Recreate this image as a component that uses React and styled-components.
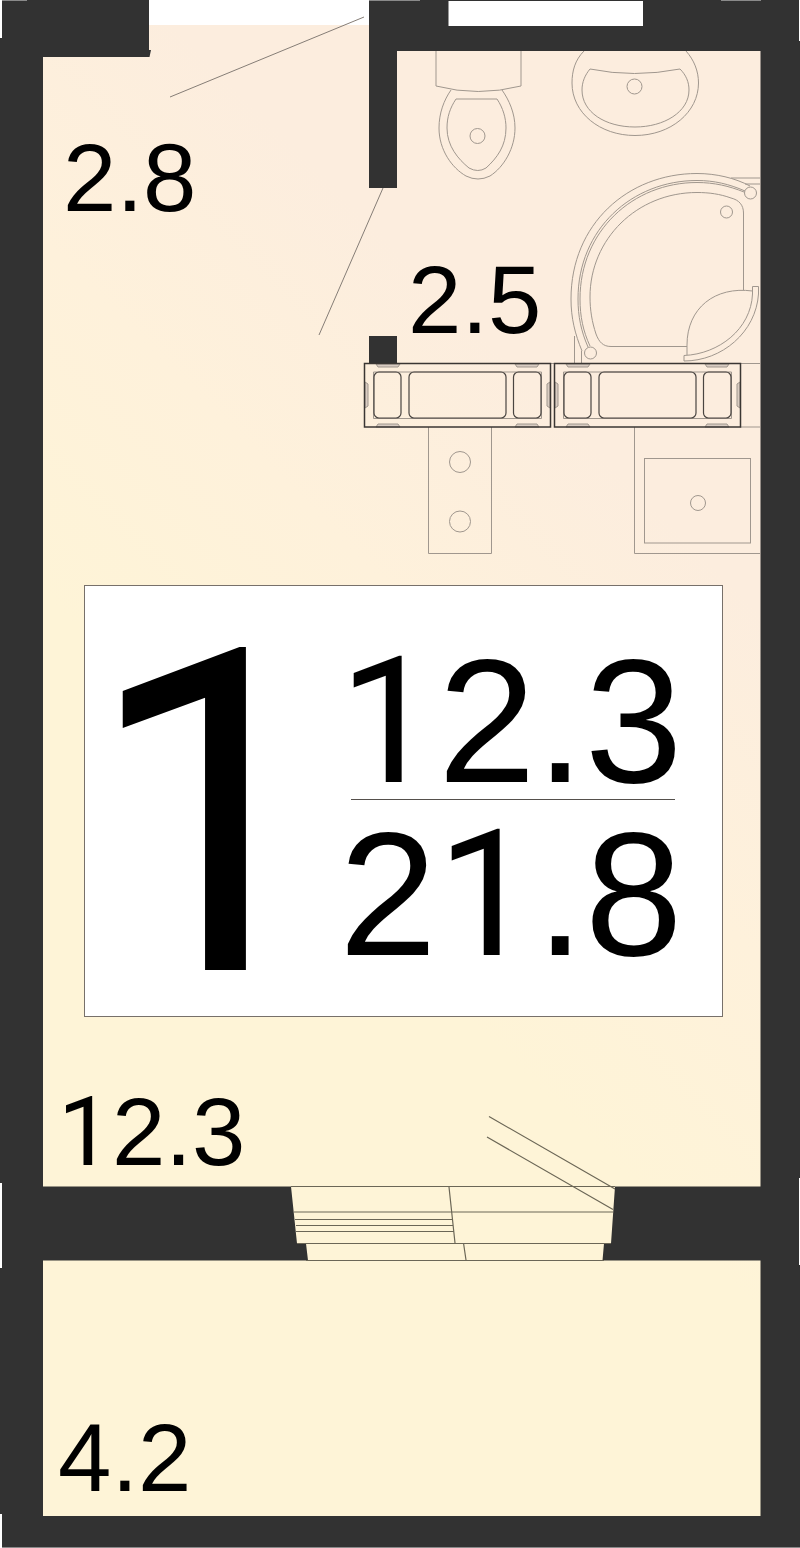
import React from "react";
import styled, { createGlobalStyle } from "styled-components";

const WALL = "#323232";
const LINE = "#a0978e";
const DARK_LINE = "#4a4541";

const GlobalStyle = createGlobalStyle`
  body {
    margin: 0;
    background: #ffffff;
    color: #000000;
    font-family: "Liberation Sans", Arial, sans-serif;
  }
`;

const Plan = styled.main`
  display: grid;
  grid-template-columns: minmax(0, 1fr);
  width: 100%;
`;

const Drawing = styled.svg`
  grid-area: 1 / 1;
  display: block;
  width: 100%;
  height: auto;
`;

const Rooms = styled.div`
  grid-area: 1 / 1;
  display: grid;
  grid-template-columns: minmax(0, 1fr);
  grid-template-rows: 585fr 432fr 243fr 288fr;
`;

const Entrance = styled.section`
  display: grid;
  grid-template-columns: 46fr 54fr;
  align-items: start;
`;

const Room = styled.section`
  padding: ${(p) => p.$top}px 0 0 ${(p) => p.$left}px;
`;

const Area = styled.p`
  margin: 0;
  font-size: ${(p) => (p.$large ? 176 : 96)}px;
  line-height: ${(p) => (p.$large ? 140 : 94)}px;
  white-space: nowrap;
`;

/* The plan's lettering uses a "1" that has no foot. */
const One = styled.span`
  font-family: Roboto, sans-serif;
  line-height: 0;
`;

const Summary = styled.section`
  display: flex;
  justify-content: space-between;
  align-items: flex-start;
  box-sizing: border-box;
  margin: 0 77px 0 84px;
  padding-right: 40px;
  border: 1px solid #77706a;
  background: #ffffff;
`;

const RoomCount = styled.p`
  margin: 0;
  padding-top: 30px;
  font-family: Roboto, sans-serif;
  font-size: 452px;
  line-height: 400px;
`;

const Fraction = styled.div`
  padding-top: 65px;
`;

const Rule = styled.hr`
  height: 1px;
  margin: 8px 8px 24px 12px;
  border: 0;
  background: #55504c;
`;

function Figure({ value, large }) {
  return (
    <Area $large={large}>
      {value.split("").map((c, i) => (c === "1" ? <One key={i}>1</One> : c))}
    </Area>
  );
}

function VentBlock({ x }) {
  return (
    <g transform={`translate(${x} 363)`} fill="none">
      <g fill="#d9ccc2" stroke={LINE}>
        <path d="M12 1 L14 4 H34 L36 1 Z M151 1 L153 4 H173 L175 1 Z" />
        <path d="M12 64 L14 61 H34 L36 64 Z M151 64 L153 61 H173 L175 64 Z" />
        <path d="M1 19 L4 21 V43 L1 45 Z M186 19 L183 21 V43 L186 45 Z" />
      </g>
      <path d="M9.500 9 H177.500 V55.500 H9.500 Z" stroke={LINE} />
      <g stroke={DARK_LINE} strokeWidth="1.200">
        <rect x="10" y="9" width="27" height="46" rx="5" />
        <rect x="45" y="9" width="97" height="46" rx="5" />
        <rect x="149.500" y="9" width="27.500" height="46" rx="5" />
      </g>
      <rect x="0.500" y="0.500" width="186" height="63.500" stroke="#3a3633" strokeWidth="1.500" />
    </g>
  );
}

function Toilet() {
  return (
    <g>
      <path d="M436 51 V86 Q478 97 521 86 V51" />
      <path d="M451 90 C444 100 439 113 439 128 C439 150 452 168 466 176 Q478 182 490 176 C504 167 515 148 515 128 C515 113 509 100 502 90" />
      <path d="M456 99 H497 C503 108 506 118 506 128 C506 146 497 158 486 168 Q478 173 469 168 C458 159 447 146 447 128 C447 117 450 108 456 99 Z" />
      <circle cx="477.500" cy="136" r="7.500" />
    </g>
  );
}

function Washbasin() {
  return (
    <g>
      <path d="M584 51 C575 60 572 71 572 83 C572 113 600 135.500 635 135.500 C671 135.500 698.500 112 698.500 83 C698.500 71 694 60 686 51" />
      <path d="M590 69 Q634 78 680 69 C686 75 689 82 689 90 C689 112 664 127 635 127 C605 127 582 112 582 90 C582 82 585 75 590 69 Z" />
      <circle cx="634.500" cy="86.500" r="7.500" />
    </g>
  );
}

function Shower() {
  return (
    <g>
      <path d="M582 351 C575 334 571 318 571 299 C571 224 628 173.500 697 173.500 C716 173.500 735 178 750 186" />
      <path d="M588 347 C581 331 578 316 578 299 C578 229 632 180.500 697 180.500 C714 180.500 729 184 745 191" />
      <path d="M590 346 C583 331 580 316 580 299 C580 231 633 182.500 697 182.500 C714 182.500 729 186 744 192" />
      <path d="M743.500 290 V213 C743.500 205 739 200 731 198 C720 194 709 192.500 697 192.500 C637 192.500 590 239 590 297 C590 310 592 322 596 334 C599 342 603 346.500 611 346.500 H687" />
      <circle cx="750.500" cy="193" r="6" />
      <circle cx="590.500" cy="353" r="6" />
      <circle cx="726.500" cy="212" r="6" />
      <path d="M752.500 291 C715 286 687 308 687 345 V355" />
      <path d="M752.500 294 V286.500 H758.500 V294 C756 332 722 361 684 361 V355.500 C719 354 751 329 752.500 294" />
      <path d="M731 178 H760 M745 184 H760 M574.500 336 V363 M581.500 351 V363" />
    </g>
  );
}

function Kitchen() {
  return (
    <g>
      <path d="M428.500 427 V553.500 H491.500 V427" />
      <circle cx="460" cy="462" r="10.500" />
      <circle cx="460" cy="521.500" r="10.500" />
      <path d="M634.500 427 V553.500 H760" />
      <rect x="644.500" y="458.500" width="106" height="84.500" />
      <circle cx="698" cy="503" r="7.500" />
    </g>
  );
}

function FloorPlan() {
  return (
    <Drawing viewBox="0 0 800 1548" role="img" aria-label="Floor plan">
      <defs>
        <linearGradient id="floor" gradientUnits="userSpaceOnUse" x1="475" y1="325" x2="125" y2="675">
          <stop offset="0" stopColor="#fcedde" />
          <stop offset="0.500" stopColor="#fef1db" />
          <stop offset="1" stopColor="#fef4d7" />
        </linearGradient>
      </defs>

      <rect x="43" y="25" width="718" height="1492" fill="url(#floor)" />

      <g fill={WALL}>
        <path d="M2 0 H149 V50 H151 L149.500 57 H43 V1186.500 H291 L297 1243.500 H306 L308 1260.500 H43 V1516 H760.500 V1260.500 H602.500 L604 1243.500 H611 L615 1186.500 H760.500 V51 H397 V188 H369 V0 H799 V41 H800 V1178 H799 V1265 H800 V1548 H2 V1514 H0 V1268 H2 V1183 H0 V38 H2 Z" />
        <rect x="369" y="336" width="28" height="27.500" />
      </g>
      <rect x="448.500" y="1" width="194.500" height="25" fill="#ffffff" />
      <path d="M2 0.500 H27 M369 0.500 H420 M721 0.500 H761 M2 1547.500 H800" stroke="#8a8a8a" />

      <g fill="none" stroke="#857d76">
        <path d="M170 97 L364 17 M383 188 L319 335" />
      </g>

      <g fill="none" stroke={LINE}>
        <Toilet />
        <Washbasin />
        <Shower />
        <Kitchen />
        <path d="M397 363.500 H760 M740 427 H760" />
      </g>

      <VentBlock x={364} />
      <VentBlock x={554} />

      <g fill="none" stroke="#6b6656" strokeWidth="1.200">
        <path d="M291 1186.500 H615 M294 1212 H613 M295 1219.500 H453 M296 1225.500 H453 M296 1231.500 H454 M297 1243.500 H611 M306 1260.500 H604" />
        <path d="M449 1187 L455 1243 M463.500 1243 L466 1260" />
        <path d="M489 1116.500 L615 1189 M487 1137 L613 1209.500" />
      </g>
    </Drawing>
  );
}

export default function App() {
  return (
    <>
      <GlobalStyle />
      <Plan>
        <FloorPlan />
        <Rooms>
          <Entrance>
            <Room $top={131} $left={63}>
              <Figure value="2.8" />
            </Room>
            <Room $top={253} $left={40}>
              <Figure value="2.5" />
            </Room>
          </Entrance>
          <Summary>
            <RoomCount>1</RoomCount>
            <Fraction>
              <Figure value="12.3" large />
              <Rule />
              <Figure value="21.8" large />
            </Fraction>
          </Summary>
          <Room $top={68} $left={58}>
            <Figure value="12.3" />
          </Room>
          <Room $top={151} $left={58}>
            <Figure value="4.2" />
          </Room>
        </Rooms>
      </Plan>
    </>
  );
}
